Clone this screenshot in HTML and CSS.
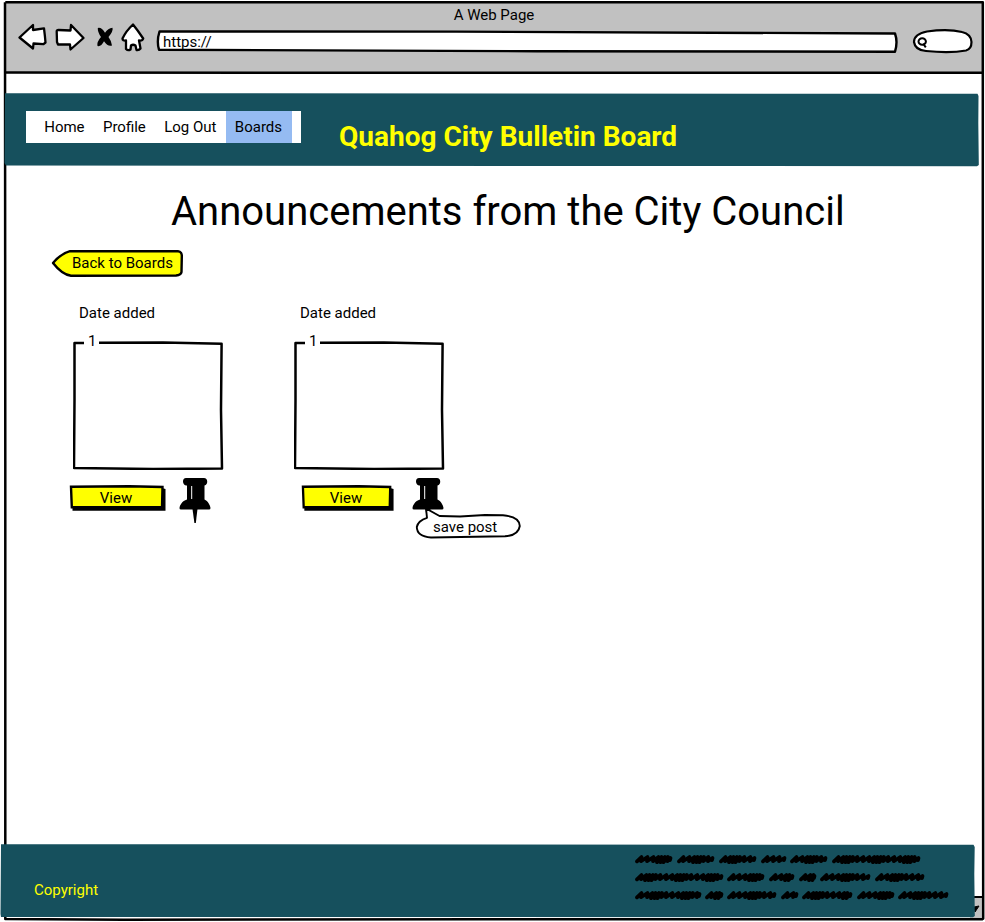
FILE: index.html
```html
<!DOCTYPE html>
<html lang="en">
<head>
<meta charset="utf-8">
<title>A Web Page</title>
<link rel="stylesheet" href="styles.css">
</head>
<body>
<svg class="defs" aria-hidden="true">
  <symbol id="pin" viewBox="0 0 32 46">
    <path d="M7 0H25C29 0 29.5 6.500 25.500 7.500V21.500C29 23 31 27 31.500 30Q31.500 31.500 30 31.500H2Q.3 31.500 .5 30C1 27 3 23 8 21.500V7.500H7C3 6.500 3 0 7 0Z"/>
    <path d="M13.500 31H18.500L16.800 45H15.400Z"/>
    <path d="M12.700 8V21" fill="none" stroke="#fff" stroke-width="1"/>
  </symbol>
  <symbol id="postbox" viewBox="0 0 152 130">
    <path d="M11 3H1.500L1.500 60L1 128L80 129L149 128.600L148 70L148.600 3.700L90 2.500L26 2.800" fill="none" stroke="#000" stroke-width="2.500" stroke-linejoin="round"/>
  </symbol>
</svg>

<div class="window">
  <svg class="sketch" viewBox="0 0 980 920">
    <g fill="none" stroke="#000" stroke-width="2.500" stroke-linejoin="round">
      <path d="M1.300 1.200H978.800V460L979.200 917.500Q978 918.600 976 918.300H480L120 918.700L1.300 918V460L1 1.200"/>
      <path d="M1.300 71.600L500 71.700L978.800 71.700"/>
    </g>
  </svg>
  <header class="chrome">
    <div class="window-title">A Web Page</div>
    <div class="toolbar">
      <svg class="nav-icons" viewBox="0 0 130 30">
        <g fill="#fff" stroke="#000" stroke-width="2.300" stroke-linejoin="round">
          <path d="M1.500 15.500L15 3L15 8L26 6.300Q27 14 27.500 20.500L25.500 22.200L15.500 21.500L15 26.500Z"/>
          <path d="M38.700 9.500Q38.500 8 40.500 8L52.500 8.500L53 3L65.500 16L52.500 27.500L52 22.500L40 22.500L39 20Z"/>
          <path d="M115 2.500Q119.500 8 125.200 16.500Q124.500 19 121 18.500L122.500 26.500Q121 28.500 118.500 28L117.500 23.500Q115 22 113 23.500L112.500 27.500Q110 29 108 27L108 18.500Q104.500 19 104.500 16.500Q108 9 115 2.500Z"/>
        </g>
        <path d="M79.800 6Q83.500 5 87 10.800Q90 6 94.500 5.700Q95.500 9 90.500 15Q93.500 19 94 23.500Q90 25 86 19.300Q83 25 79.500 24Q78.500 20 83 15Q79.500 10 79.800 6Z"/>
      </svg>
      <div class="address">
        <svg class="sketch" viewBox="0 0 742 24" preserveAspectRatio="none">
          <path d="M3.500 1.500L300 1.600L739 3.500Q742 12 739 21.700L380 21.200L3 19.700Q.5 11 3.500 1.500Z" fill="#fff" stroke="#000" stroke-width="2.400" stroke-linejoin="round"/>
        </svg>
        <span class="url">https://</span>
      </div>
      <svg class="search" viewBox="0 0 62 26">
        <path d="M15 3.500Q36 .5 50 4Q59 6 59.500 14Q59.500 21 54 22.500Q38 25.500 14 23Q3 22 2 14Q2 6 15 3.500Z" fill="#fff" stroke="#000" stroke-width="2.200"/>
        <path d="M7 13.500A3.700 3.300 0 1 1 14.400 13.500A3.700 3.300 0 1 1 7 13.500M11.500 15.500L14.300 19.400" transform="translate(-.500 0)" fill="none" stroke="#000" stroke-width="2"/>
      </svg>
    </div>
  </header>

  <div class="banner">
    <svg class="sketch" viewBox="0 0 975 74" preserveAspectRatio="none">
      <path d="M1 .2L973.500 .8L974.500 3L974.300 30L974.800 72L973 73.200L2 72.600L.5 70Z" fill="#16505d"/>
    </svg>
    <nav class="menu">
      <a>Home</a><a>Profile</a><a>Log Out</a><a class="active">Boards</a>
    </nav>
    <div class="site-title">Quahog City Bulletin Board</div>
  </div>

  <main class="page">
    <h1>Announcements from the City Council</h1>
    <div class="back">
      <svg class="sketch" viewBox="0 0 134 28">
        <path d="M2 14Q10 4.500 19 2.200H127Q131.200 2.500 130.800 8L130.500 23Q130 26 125 26.500L20 26.800Q11 25.500 2 14Z" fill="#ff0" stroke="#000" stroke-width="2.400" stroke-linejoin="round"/>
      </svg>
      <span>Back to Boards</span>
    </div>
    <div class="posts">
      <article class="post">
        <div class="date">Date added</div>
        <div class="box"><svg class="sketch"><use href="#postbox"/></svg><span>1</span></div>
        <div class="actions">
          <div class="view">
            <svg class="sketch" viewBox="0 0 98 28" preserveAspectRatio="none">
              <path d="M3.500 4H93L96.500 5V26.700H3.500Z"/>
              <path d="M2 2.700L60 2.300L93.500 3L93 23.300H2.800Z" fill="#ff0" stroke="#000" stroke-width="2.400"/>
            </svg>
            <span>View</span>
          </div>
          <svg class="pin"><use href="#pin"/></svg>
        </div>
      </article>
      <article class="post second">
        <div class="date">Date added</div>
        <div class="box"><svg class="sketch"><use href="#postbox"/></svg><span>1</span></div>
        <div class="actions">
          <div class="view">
            <svg class="sketch" viewBox="0 0 98 28" preserveAspectRatio="none">
              <path d="M3.500 4H93L96.500 5V26.700H3.500Z"/>
              <path d="M2 2.700L60 2.300L93 3L92.500 23.300H2.800Z" fill="#ff0" stroke="#000" stroke-width="2.400"/>
            </svg>
            <span>View</span>
          </div>
          <svg class="pin"><use href="#pin"/></svg>
          <div class="tooltip">
            <svg class="sketch" viewBox="0 0 106 34">
              <path d="M11 2.500L24.500 10L45 10.500L70 9L88 9.300Q104.500 10.500 104.800 20Q103.500 29.300 90 30.300Q50 31 16 31.500Q2 30.500 1.800 21Q3 14.500 12 11.800Z" fill="#fff" stroke="#000" stroke-width="1.900" stroke-linejoin="round"/>
            </svg>
            <span>save post</span>
          </div>
        </div>
      </article>
    </div>
  </main>

  <div class="scroll-corner">
    <svg viewBox="0 0 8 20"><path d="M0 9L5 8L1 14Z" stroke="#000" stroke-width="1"/></svg>
  </div>
</div>

<footer class="footer">
  <svg class="sketch" viewBox="0 0 974 74" preserveAspectRatio="none">
    <path d="M0 .2L972.500 .8L973.700 3L973.300 30L973.800 72L972 73.200L0 73L-.5 70Z" fill="#16505d"/>
  </svg>
  <span class="copyright">Copyright</span>
  <svg class="scribble" viewBox="0 0 316 50" aria-hidden="true"></svg>
</footer>
<script src="scribble.js"></script>
</body>
</html>
```
FILE: styles.css
```css
* { box-sizing: border-box; }
body {
  margin: 0;
  width: 985px;
  height: 922px;
  overflow: hidden;
  position: relative;
  background: #fff;
  color: #000;
  font: 15px/18px Roboto, sans-serif;
}
.defs { position: absolute; width: 0; height: 0; }
.sketch { position: absolute; inset: 0; width: 100%; height: 100%; overflow: visible; }
.window {
  position: relative;
  display: flex;
  flex-direction: column;
  margin: 1px 1px 0 4px;
  height: 920px;
  padding: 2px;
}
.chrome { flex: none; height: 70px; background: #c1c1c1; }
.window-title { height: 19px; padding-top: 3px; text-align: center; }
.toolbar { display: flex; align-items: flex-start; padding-left: 12px; }
.nav-icons { width: 130px; height: 30px; flex: none; }
.address { position: relative; width: 742px; height: 24px; margin: 8px 0 0 8px; flex: none; }
.url { position: relative; display: block; padding: 3px 0 0 7px; }
.search { width: 62px; height: 26px; margin: 6px 0 0 14px; flex: none; }
.banner {
  position: relative;
  flex: none;
  display: flex;
  align-items: flex-start;
  height: 74px;
  margin: 20px 3px 0 -2px;
  padding: 18px 0 0 22px;
}
.menu { position: relative; display: flex; width: 275px; height: 32px; padding-left: 9px; background: #fff; }
.menu a { padding: 7px 9.200px; }
.menu .active { padding: 7px 10px 0 9.200px; background: #95bbf2; }
.site-title { position: relative; margin: 10px 0 0 38px; color: #ff0; font: bold 28px/32px Roboto, sans-serif; }
.page { flex: 1; }
h1 { margin: 22px 0 0 165px; font: 400 40px/46px Roboto, sans-serif; white-space: nowrap; }
.back { position: relative; width: 134px; height: 28px; margin: 14px 0 0 45px; padding: 5px 0 0 21px; }
.back span, .view span, .tooltip span { position: relative; }
.posts { display: flex; margin: 27px 0 0 63px; gap: 67px; }
.post { width: 154px; }
.date { margin-left: 10px; }
.box { display: flow-root; position: relative; width: 152px; height: 130px; margin: 18px 0 0 4px; padding-left: 15px; }
.box span { position: relative; display: block; margin-top: -8px; line-height: 18px; }
.actions { position: relative; display: flex; margin-top: 8px; align-items: flex-start; }
.view { position: relative; width: 98px; height: 28px; margin-top: 6px; padding: 5px 4px 0 0; text-align: center; }
.pin { width: 32px; height: 46px; margin-left: 12px; }
.second .view { width: 94px; margin-left: 11px; }
.second .pin { margin-left: 17px; }
.tooltip { position: absolute; left: 125px; top: 28px; width: 106px; height: 34px; padding: 12px 0 0 18px; }
.scroll-corner {
  align-self: flex-end;
  flex: none;
  width: 12px;
  height: 23px;
  padding-left: 4px;
  background: #c1c1c1;
  border-top: 2px solid #000;
}
.scroll-corner svg { display: block; width: 8px; height: 20px; }
.footer {
  position: relative;
  display: flex;
  justify-content: space-between;
  align-items: flex-start;
  width: 974px;
  height: 74px;
  margin: -77px 0 0 1px;
  padding: 7px 24px 0 33px;
}
.copyright { position: relative; margin-top: 30px; color: #ff0; }
.scribble { position: relative; width: 316px; height: 50px; }
```
FILE: scribble.js
```javascript
// Each row lists [start, width] for the scribbled words of the footer text.
const rows = [
  [[0, 37], [42, 37], [84, 37], [126, 25], [155, 37], [197, 88]],
  [[0, 88], [92, 37], [134, 25], [164, 17], [185, 50], [240, 49]],
  [[0, 66], [70, 18], [92, 49], [146, 17], [167, 50], [222, 37], [263, 50]]
];
// Distance from one pen stroke to the next: wide loops, then tight ones.
const steps = [6, 6, 5, 3, 3.4, 3, 4.5];
let d = "";
rows.forEach((words, r) => {
  const y = 8.2 + r * 18;
  words.forEach(([start, width], w) => {
    const end = start + width - 1.5;
    let x = start + 2;
    let i = (w + r * 2) % 3;
    d += `M${x} ${y + 2.2}`;
    while (x < end - 5) {
      const step = steps[i++ % steps.length];
      const low = step < 4 ? 3 : 2;
      d += `L${x + 4.5} ${y - 2.2}L${x + Math.min(step, 4)} ${y + low}`;
      x += step;
    }
    d += `L${end} ${y - 1.2}L${end - 0.5} ${y + 1}`;
  });
});
const path = document.createElementNS("http://www.w3.org/2000/svg", "path");
path.setAttribute("d", d);
path.setAttribute("fill", "none");
path.setAttribute("stroke", "#000");
path.setAttribute("stroke-width", "3.7");
path.setAttribute("stroke-linecap", "round");
path.setAttribute("stroke-linejoin", "round");
document.querySelector(".scribble").append(path);
```
